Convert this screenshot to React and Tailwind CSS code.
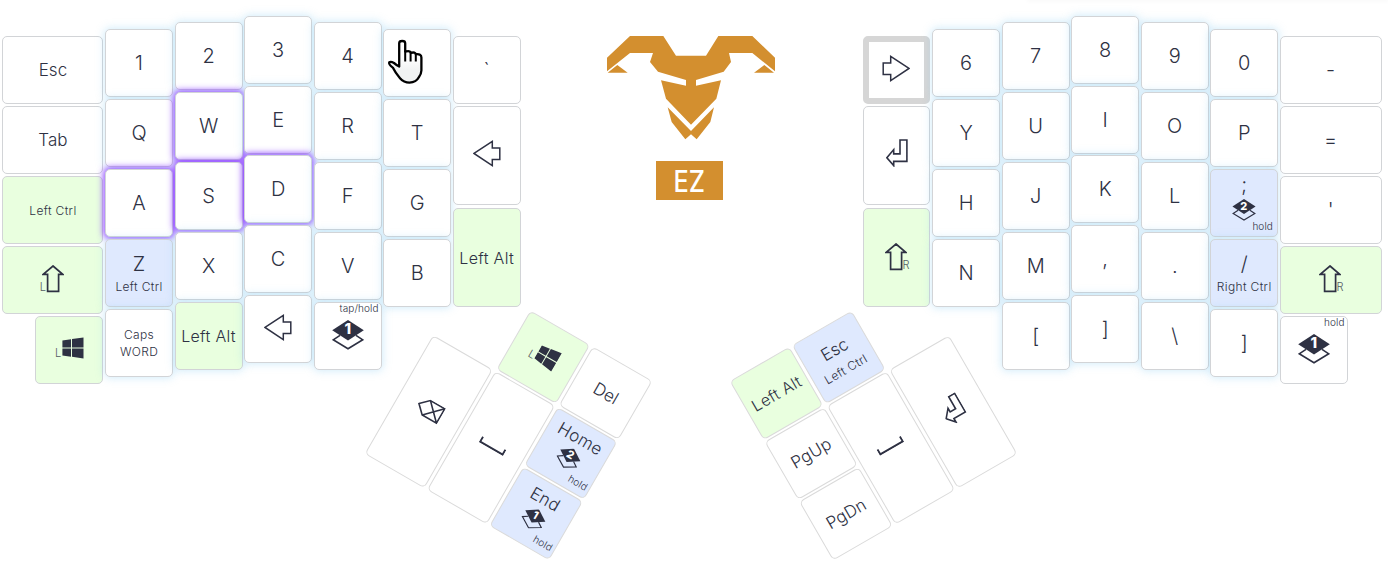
import React from "react";
import clsx from "clsx";

const INK = "#2e3143";

function ArrowLeft({ flip }) {
  return (
    <svg width="28" height="27" viewBox="0 0 28 27" className={clsx("relative shrink-0", flip ? "-left-[1px] -top-[2px] -scale-x-100" : "-top-[1.5px]")}>
      <path d="M1 13.4 19.3 1.4V8H26.8V19.4H19.3V25.6Z" fill="none" stroke={INK} strokeWidth="1.5" />
    </svg>
  );
}

function ArrowUp() {
  return (
    <svg width="22" height="28" viewBox="0 0 22 28" className="shrink-0">
      <path d="M11 1 20.8 9.4H16.6V26.4H5.6V9.4H1.2Z" fill="none" stroke={INK} strokeWidth="1.7" />
    </svg>
  );
}

function Enter() {
  return (
    <svg width="22" height="28" viewBox="0 0 22 28" className="relative -top-[2px] shrink-0">
      <path d="M14 1H20.9V22.4H7.7V26.6L.9 18.7 7.7 10.6V14.9H14Z" fill="none" stroke={INK} strokeWidth="1.6" />
    </svg>
  );
}

function Backspace() {
  return (
    <svg width="27" height="19" viewBox="0 0 27 19" className="relative -top-[1.5px] shrink-0">
      <path d="M1 9.3 9.5 1H26V17.6H9.5ZM9.5 1 26 17.6M26 1 9.5 17.6" fill="none" stroke={INK} strokeWidth="1.6" />
    </svg>
  );
}

function Space() {
  return (
    <svg width="28" height="8" viewBox="0 0 28 8" className="relative -top-[2px] shrink-0">
      <path d="M1 1V6.6H27V1" fill="none" stroke={INK} strokeWidth="2" />
    </svg>
  );
}

function Win() {
  return (
    <svg width="22" height="22" viewBox="0 0 22 22" className="shrink-0">
      <path d="M.4 3.6 9 2.3V10.4H.4ZM10 2.1 21.5.4V10.4H10ZM.4 11.5H9V19.7L.4 18.4ZM10 11.5H21.5V21.5L10 19.8Z" fill={INK} />
    </svg>
  );
}

function Layer({ n, small }) {
  return (
    <svg width={small ? 24 : 32} height={small ? 22 : 30} viewBox="0 0 32 30" className={clsx("relative shrink-0", !small && "-top-[1px]")}>
      <path d="M8 15.3 1.2 19.8 16 28.8 30.8 19.8 24 15.3" fill="none" stroke={INK} strokeWidth="1.6" />
      <path d="M16 0 31.8 10.2 16 20.5.2 10.2Z" fill={INK} />
      <text x="15.8" y="14.4" textAnchor="middle" fontSize="15" fontWeight="800" fill="#fff" fontFamily="Inter, sans-serif">
        {n}
      </text>
    </svg>
  );
}

function Side({ children }) {
  return <span className="text-[11px] leading-[11px] opacity-80">{children}</span>;
}

const WinKey = () => (
  <span className="relative -top-[2px] flex items-end gap-[1px]">
    <Side>L</Side>
    <Win />
  </span>
);
const ShiftL = () => (
  <span className="relative -left-[1px] -top-[1px] flex items-end">
    <span className="-mr-[4px] flex">
      <Side>L</Side>
    </span>
    <ArrowUp />
  </span>
);
const ShiftR = () => (
  <span className="relative -top-[1px] left-[0.5px] flex items-end">
    <ArrowUp />
    <span className="-ml-[4px] flex">
      <Side>R</Side>
    </span>
  </span>
);

const sizes = {
  xl: "text-[20px] leading-6",
  lg: "text-[17px] leading-6",
  md: "text-[16px] leading-6 tracking-[0.3px]",
  sm: "text-[12px] leading-[17px] tracking-[0.35px]",
};
const fills = { w: "bg-white", g: "bg-[#e9ffdf]", b: "bg-[#dfe9fe]" };
const glows = {
  none: "",
  blue: "shadow-[0_0_9px_1px_rgba(125,200,240,0.34)]",
  purple: "shadow-[0_0_6px_2px_rgba(135,60,255,0.85)]",
};

function Key({ k, glow = "none", thumb }) {
  const h = thumb ? (k.tall ? "h-[137.2px]" : "h-[67.7px]") : k.tall ? "h-[98.5px]" : "h-[68.1px]";
  const w = k.narrow ? "w-[68px]" : "w-full";
  return (
    <div
      className={clsx(
        "relative flex shrink-0 flex-col items-center justify-center rounded-[5px]",
        k.selected ? "border-[6px] border-[#d6d6d6]" : thumb ? "border-[1.5px] border-[#dadada]" : "border border-[#d2d4d7]",
        h,
        w,
        fills[k.c || "w"],
        glows[k.glow || glow]
      )}
    >
      {k.t && !k.layer && <span className={clsx("whitespace-pre text-center", sizes[k.s || "xl"], k.sub && "mt-[3px]")}>{k.t}</span>}
      {k.sub && <span className="mt-[1px] whitespace-nowrap text-[12px] leading-[20px] tracking-[0.35px]">{k.sub}</span>}
      {k.layer && (
        <div className={clsx("flex flex-col items-center", thumb ? "-mt-[13px] ml-[1px]" : "-mt-[12px] gap-[2px]")}>
          <span className={clsx(sizes[k.s || "xl"], thumb && "tracking-[0.3px]")}>{k.t}</span>
          <Layer n={k.layer} small />
        </div>
      )}
      {k.icon}
      {k.top && <span className="absolute -top-[1px] right-[2px] whitespace-nowrap text-[10px] leading-3 tracking-[0.1px]">{k.top}</span>}
      {k.bottom && <span className={clsx("absolute text-[10px] leading-3 tracking-[0.1px]", thumb ? "bottom-[5.5px] right-[3px]" : "bottom-[4px] right-[4px]")}>{k.bottom}</span>}
    </div>
  );
}

function Column({ col }) {
  return (
    <div className={clsx("flex shrink-0 flex-col", col.cls, col.gap || "gap-[1.7px]")}>
      {col.keys.map((k, i) => (
        <Key key={i} k={k} glow={col.glow} />
      ))}
    </div>
  );
}

const W = "w-[67.95px]";
const left = [
  {
    cls: "w-[101.1px] pt-[36.4px] items-end",
    keys: [
      { t: "Esc", s: "lg" },
      { t: "Tab", s: "lg" },
      { t: "Left Ctrl", s: "sm", c: "g" },
      { icon: <ShiftL />, c: "g" },
      { icon: <WinKey />, c: "g", narrow: true },
    ],
  },
  {
    cls: W + " pt-[29.4px]",
    glow: "blue",
    keys: [{ t: "1" }, { t: "Q" }, { t: "A", glow: "purple" }, { t: "Z", sub: "Left Ctrl", c: "b" }, { t: "Caps\nWORD", s: "sm" }],
  },
  {
    cls: W + " pt-[22.4px]",
    glow: "blue",
    keys: [{ t: "2" }, { t: "W", glow: "purple" }, { t: "S", glow: "purple" }, { t: "X" }, { t: "Left Alt", s: "md", c: "g" }],
  },
  {
    cls: W + " pt-[15.8px]",
    glow: "blue",
    keys: [{ t: "3" }, { t: "E" }, { t: "D", glow: "purple" }, { t: "C" }, { icon: <ArrowLeft /> }],
  },
  {
    cls: W + " pt-[22.4px]",
    glow: "blue",
    keys: [{ t: "4" }, { t: "R" }, { t: "F" }, { t: "V" }, { icon: <Layer n="1" />, top: "tap/hold" }],
  },
  { cls: W + " pt-[29.4px]", glow: "blue", keys: [{}, { t: "T" }, { t: "G" }, { t: "B" }] },
  {
    cls: W + " pt-[36.3px]",
    gap: "gap-[3.7px] [&>*:nth-child(2)]:-mt-[2px]",
    keys: [{ t: "`" }, { icon: <ArrowLeft />, tall: true }, { t: "Left Alt", s: "md", c: "g", tall: true }],
  },
];

const right = [
  {
    cls: "w-[67.3px] mr-[0.3px] pt-[36.3px]",
    gap: "gap-[3.7px] [&>*:nth-child(2)]:-mt-[2px]",
    keys: [{ icon: <ArrowLeft flip />, selected: true }, { icon: <Enter />, tall: true }, { icon: <ShiftR />, c: "g", tall: true }],
  },
  { cls: W + " pt-[29.4px]", glow: "blue", keys: [{ t: "6" }, { t: "Y" }, { t: "H" }, { t: "N" }] },
  { cls: W + " pt-[22.4px]", glow: "blue", keys: [{ t: "7" }, { t: "U" }, { t: "J" }, { t: "M" }, { t: "[" }] },
  { cls: W + " pt-[15.8px]", glow: "blue", keys: [{ t: "8" }, { t: "I" }, { t: "K" }, { t: "," }, { t: "]" }] },
  { cls: W + " pt-[22.4px]", glow: "blue", keys: [{ t: "9" }, { t: "O" }, { t: "L" }, { t: "." }, { t: "\\" }] },
  {
    cls: "w-[67.5px] ml-[0.2px] pt-[29.4px]",
    glow: "blue",
    keys: [{ t: "0" }, { t: "P" }, { t: ";", layer: "2", c: "b", bottom: "hold" }, { t: "/", sub: "Right Ctrl", c: "b" }, { t: "]" }],
  },
  {
    cls: "w-[102px] pt-[36.4px]",
    keys: [
      { t: "-" },
      { t: "=" },
      { t: "'" },
      { icon: <ShiftR />, c: "g" },
      { icon: <Layer n="1" />, top: "hold", narrow: true },
    ],
  },
];

const thumbL = [
  [{ icon: <Backspace />, tall: true }],
  [{ icon: <WinKey />, c: "g" }, { icon: <Space />, tall: true }],
  [
    { t: "Del", s: "lg" },
    { t: "Home", s: "lg", layer: "2", c: "b", bottom: "hold" },
    { t: "End", s: "lg", layer: "1", c: "b", bottom: "hold" },
  ],
];
const thumbR = [
  [{ t: "Left Alt", s: "md", c: "g" }, { t: "PgUp", s: "lg" }, { t: "PgDn", s: "lg" }],
  [{ t: "Esc", s: "lg", sub: "Left Ctrl", c: "b" }, { icon: <Space />, tall: true }],
  [{ icon: <Enter />, tall: true }],
];

function Thumb({ cols, turn }) {
  return (
    <div className={clsx("flex h-[207px] w-[213.5px] shrink-0 items-end gap-[2.8px]", turn)}>
      {cols.map((keys, i) => (
        <div key={i} className="flex w-[69.3px] shrink-0 flex-col gap-[2px]">
          {keys.map((k, j) => (
            <Key key={j} k={k} thumb />
          ))}
        </div>
      ))}
    </div>
  );
}

function Logo() {
  return (
    <div className="flex w-[168px] flex-col items-center pt-9">
      <svg width="168" height="104" viewBox="51 48 504 312" fill="#d38f2f">
        <path d="M51 113 120 48H220L258 107H348L385 48H487L555 113V154L487 99H417L423 126 401 155 318 180V197L393 181 379 236 303 314 228 236 213 181 288 197V180L204 155 180 126 189 99H120L51 154Z" />
        <path d="M53 158 82 135 113 158ZM492 158 523 135 552 158ZM233 262 303 333 372 262 361 306 320 358 303 343 286 358 245 306Z" />
      </svg>
      <svg width="67" height="39" viewBox="0 0 67 39" className="mt-[21px] -ml-[2px]">
        <rect width="67" height="39" fill="#d38f2f" />
        <text x="17.6" y="30.8" fontSize="29.5" fontFamily="Inter, sans-serif" fontWeight="500" fill="#fff" textLength="31.5" lengthAdjust="spacingAndGlyphs">
          EZ
        </text>
      </svg>
    </div>
  );
}

function Pointer() {
  return (
    <svg className="absolute left-[387px] top-[39px]" width="37" height="46" viewBox="0 0 37 46">
      <defs>
        <linearGradient id="hand" x1="0" y1="0" x2="0" y2="1">
          <stop offset="0.4" stopColor="#fff" />
          <stop offset="0.7" stopColor="#f1f3f3" />
        </linearGradient>
      </defs>
      <path
        d="M12.2 27.5V4.2Q12.2 2 15.2 2T18.2 4.2V12.6Q23.4 11.4 23.8 13.8 28.4 12.8 28.8 15.2 34.4 14.6 34.4 18.4V31.5Q34.2 35.2 32 38 29.2 43.4 22.5 43.6 16.8 43.6 13 39.2 8.4 34 5.8 28.6 1.6 25.6 2.2 23.4 3.6 22 7 24 9.6 26.2 12.2 27.5Z"
        fill="url(#hand)"
        stroke="#000"
        strokeWidth="2.3"
        strokeLinejoin="round"
      />
      <path d="M18.2 12V22.5M23.6 13.5V22.5M28.8 15V22.5" stroke="#000" strokeWidth="2" />
    </svg>
  );
}

export default function App() {
  return (
    <div className="relative h-[578px] w-[1388px] overflow-hidden bg-white font-['Inter',sans-serif] font-light text-[#2e3143]">
      <div className="ml-[1028px] h-0 w-[360px] shadow-[0_0_4px_1px_rgba(0,0,0,0.05)]" />
      <div className="flex h-[384px] items-start">
        <div className="flex gap-[1.6px] pl-[2.4px]">
          {left.map((c, i) => (
            <Column key={i} col={c} />
          ))}
        </div>
        <div className="ml-[86.2px] mr-[88.1px] shrink-0">
          <Logo />
        </div>
        <div className="flex gap-[1.6px]">
          {right.map((c, i) => (
            <Column key={i} col={c} />
          ))}
        </div>
      </div>
      <div className="-mt-[69.8px] flex gap-[151.9px] pl-[401.9px]">
        <Thumb cols={thumbL} turn="rotate-30" />
        <Thumb cols={thumbR} turn="-rotate-30" />
      </div>
      <Pointer />
    </div>
  );
}
